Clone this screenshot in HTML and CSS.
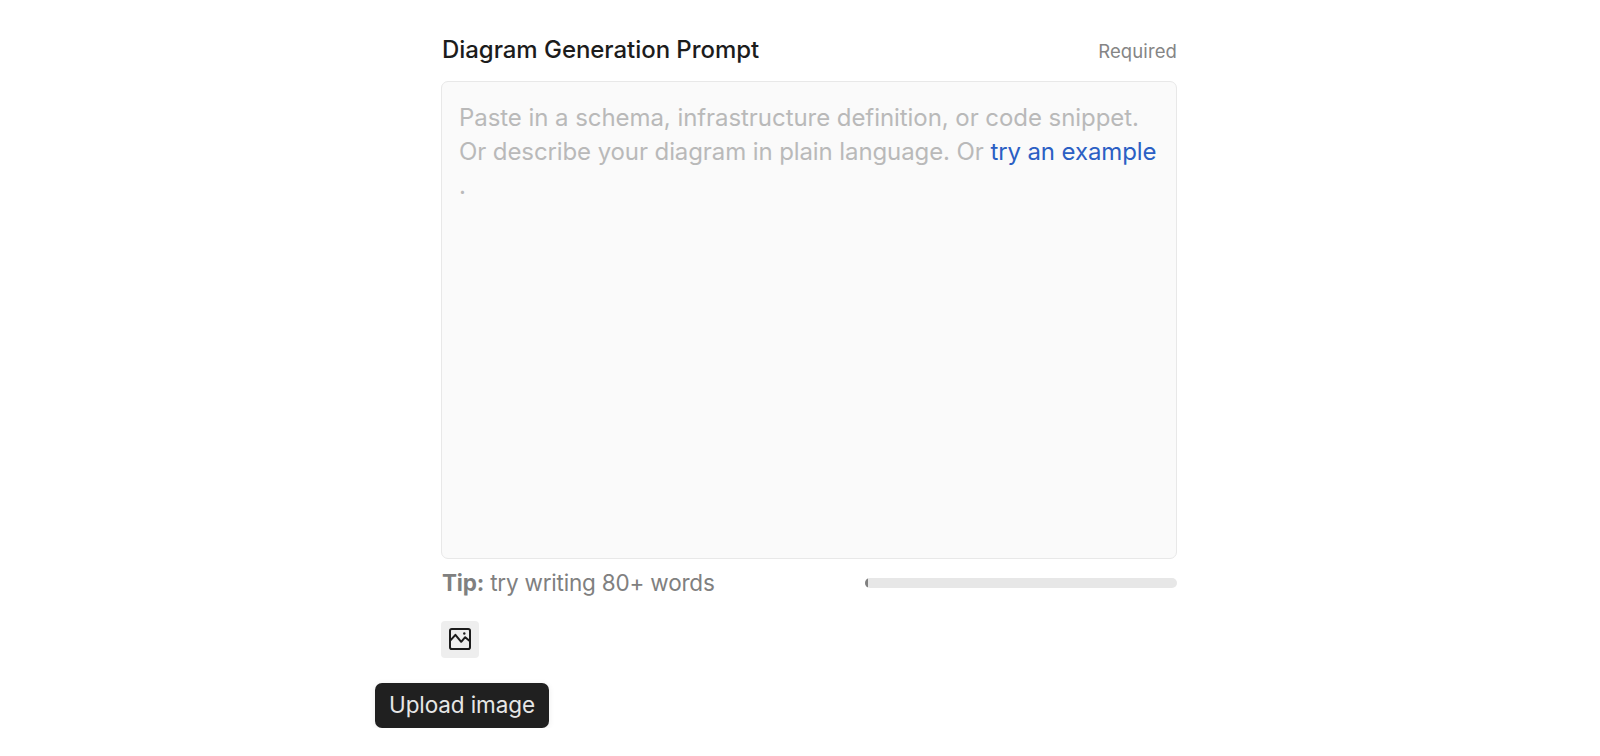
FILE: index.html
```
<!DOCTYPE html>
<html lang="en">
<head>
<meta charset="utf-8">
<title>Diagram Generation Prompt</title>
<link rel="stylesheet" href="styles.css">
</head>
<body>
<main class="form">
  <header class="form-header">
    <h1 class="title">Diagram Generation Prompt</h1>
    <span class="required">Required</span>
  </header>
  <div class="editor">
    <div class="line line-1">Paste in a schema, infrastructure definition, or code snippet.</div>
    <div class="line line-2">Or describe your diagram in plain language. Or <a class="example">try an example</a></div>
    <div class="line line-3">.</div>
  </div>
  <div class="tip-row">
    <span class="tip"><b>Tip:</b> try writing 80+ words</span>
    <div class="meter"><div class="meter-fill"></div></div>
  </div>
  <button class="upload-button" aria-label="Upload image">
    <svg class="image-icon" width="22" height="22" viewBox="0 0 22 22" fill="none" stroke="#1c1c1c" stroke-width="2" stroke-linejoin="round">
      <rect x="1" y="1" width="20" height="20" rx="1.8"/>
      <path d="M1 12.800 6.400 6.800 12.200 13.800 16.200 9.200 21 13.300"/>
      <circle cx="15.300" cy="5.500" r="1.200" fill="#1c1c1c" stroke="none"/>
    </svg>
  </button>
  <div class="upload-label">Upload image</div>
</main>
</body>
</html>
```
FILE: styles.css
```
* { box-sizing: border-box; }
body { margin: 0; background: #fff; font-family: Inter, sans-serif; }
.form { width: 736px; margin-left: 441px; padding-top: 31px; }
.form-header { display: flex; justify-content: space-between; height: 50px; }
.title { margin: 0; padding: 0 0 0 1px; font-size: 24px; line-height: 37px; font-weight: 500; letter-spacing: -0.05px; color: #1c1c1c; white-space: nowrap; }
.required { font-size: 18.500px; line-height: 40px; letter-spacing: 0.1px; color: #858585; }
.editor { height: 478px; padding: 19px 17px; border: 1px solid #e8e8e8; border-radius: 7px; background: #fafafa; }
.line { font-size: 24px; line-height: 34px; color: #b9b9b9; white-space: nowrap; }
.line-1 { letter-spacing: -0.06px; }
.line-2 { letter-spacing: -0.1px; }
.example { color: #2b5fc4; }
.tip-row { display: flex; justify-content: space-between; align-items: center; height: 48px; }
.tip { padding: 0 0 2px 1px; font-size: 22.500px; letter-spacing: -0.2px; color: #808080; white-space: nowrap; }
.meter { width: 312px; height: 10px; border-radius: 5px; background: #e7e7e7; overflow: hidden; }
.meter-fill { width: 3px; height: 10px; background: #808080; }
.upload-button { display: grid; place-items: center; width: 38px; height: 37px; margin-top: 14px; padding: 0 0 1px; border: 0; border-radius: 4px; background: #eee; }
.upload-label { display: grid; place-items: center; width: 174px; height: 45px; margin: 25px 0 0 -66px; padding-bottom: 2px; border-radius: 7px; background: #202020; color: #e6e6e6; font-size: 22.500px; letter-spacing: -0.1px; box-shadow: 0 1px 6px rgba(0, 0, 0, 0.08); white-space: nowrap; }
```
